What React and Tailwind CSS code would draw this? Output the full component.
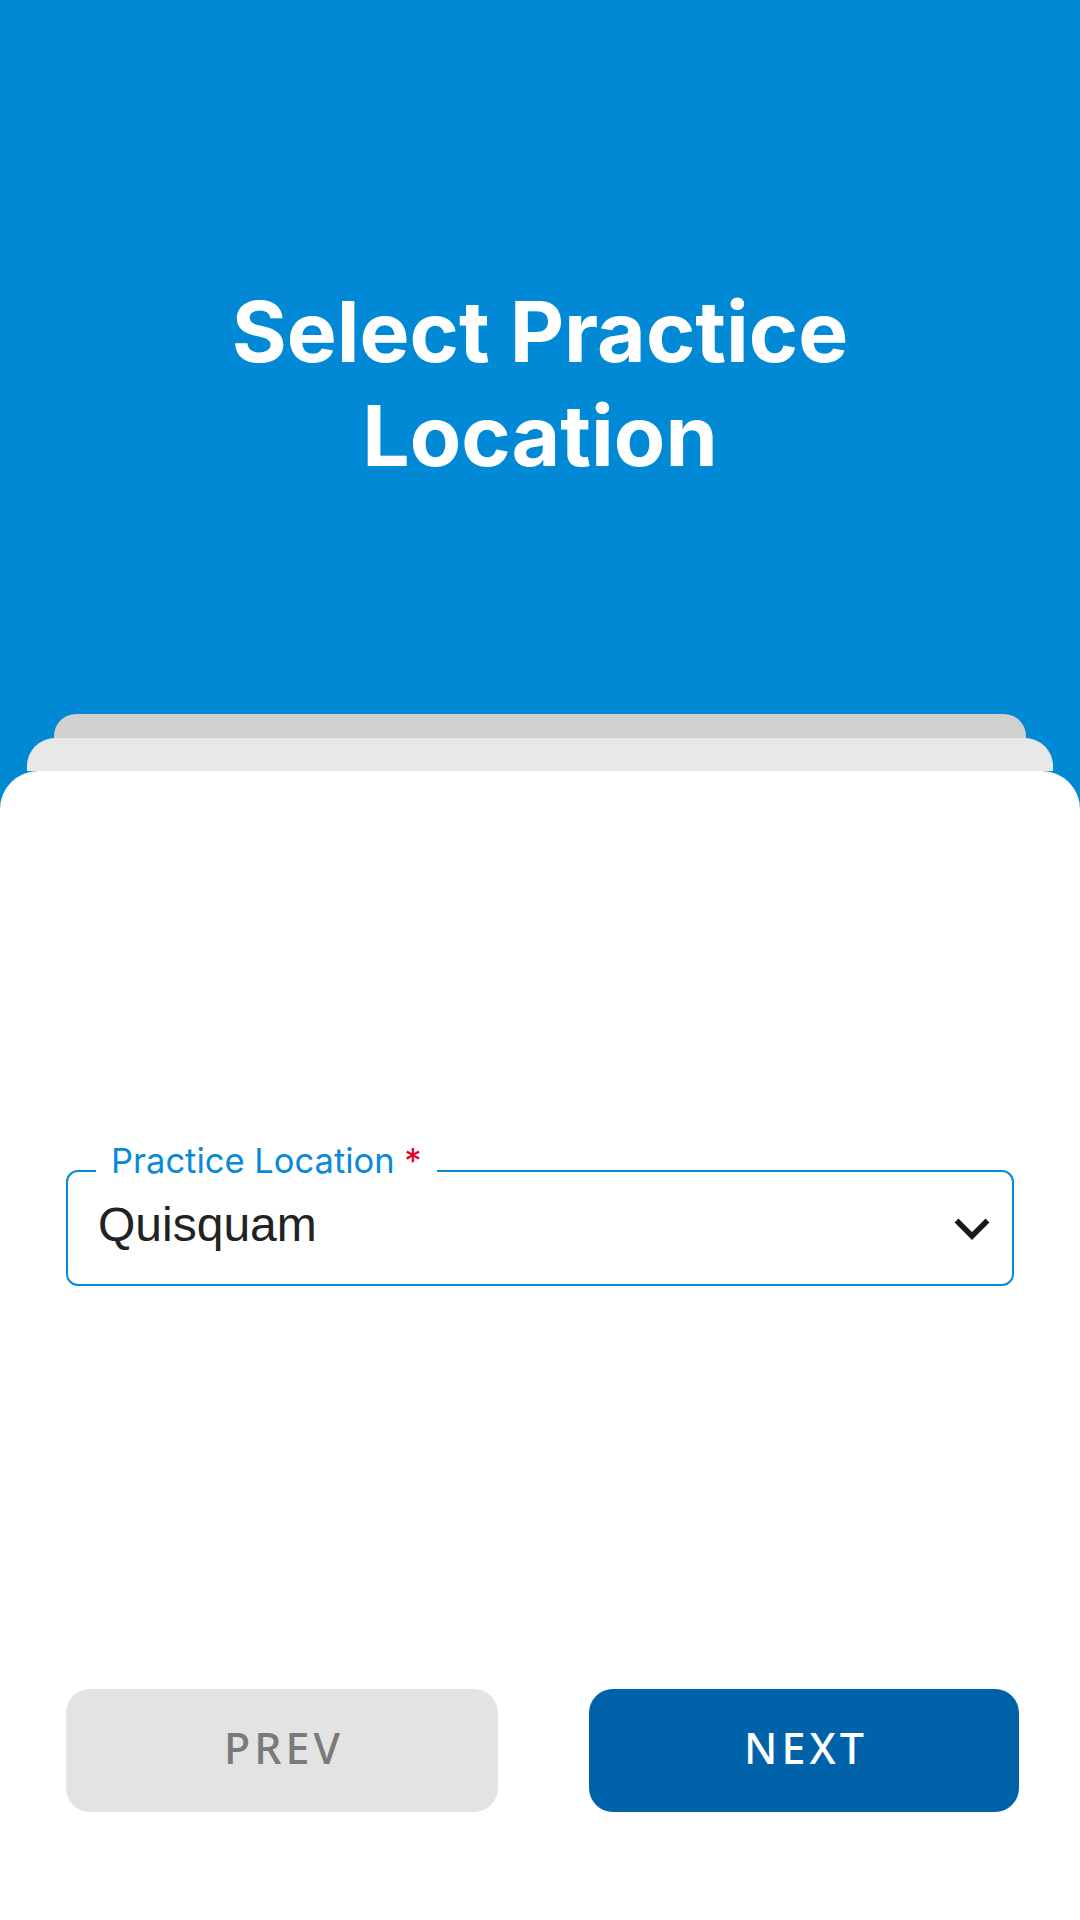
export default function App() {
  return (
    <div className="flex min-h-[1920px] w-[1080px] flex-col bg-[#0289d6]">
      <div className="h-[714px] pt-[280px]">
        <h1 className="text-center font-['Inter',sans-serif] text-[84px] font-bold leading-[104px] text-white">
          Select Practice
          <br />
          Location
        </h1>
      </div>
      <div className="mx-[54px] h-[24px] rounded-t-[22px] bg-[#d0d0d0]" />
      <div className="mx-[27px] h-[33px] rounded-t-[28px] bg-[#e8e8e8]" />
      <div className="flex flex-1 flex-col rounded-t-[38px] bg-white">
        <div className="px-[66px] pt-[399px]">
          <div className="relative flex h-[116px] items-center rounded-[12px] border-2 border-[#0a8ad6] pl-[30px] pr-[22px]">
            <span className="absolute left-[28px] top-[-29px] bg-white px-[15px] font-['Inter',sans-serif] text-[34.5px] leading-[35px] text-[#0a8ad6]">
              Practice Location <span className="text-[#e4002b]">*</span>
            </span>
            <span className="flex-1 pb-[6px] font-['Liberation_Sans',Arial,sans-serif] text-[48px] text-[#222222]">
              Quisquam
            </span>
            <svg width="36" height="23" viewBox="0 0 36 23" className="mt-[2px]">
              <path d="M2.5 2.5 L18 18 L33.5 2.5" fill="none" stroke="#1a1a1a" strokeWidth="5.5" />
            </svg>
          </div>
        </div>
        <div className="mt-[403px] flex gap-[91px] pl-[66px] pr-[61px]">
          <button className="flex h-[123px] w-[432px] items-center justify-center rounded-[24px] bg-[#e3e3e3] pb-[4px] pl-[4px] font-['Noto_Sans',sans-serif] text-[43px] font-medium tracking-[4px] text-[#7a7a7a]">
            PREV
          </button>
          <button className="flex h-[123px] w-[430px] items-center justify-center rounded-[24px] bg-[#0063aa] pb-[4px] pl-[4px] font-['Noto_Sans',sans-serif] text-[43px] font-medium tracking-[4px] text-white">
            NEXT
          </button>
        </div>
      </div>
    </div>
  );
}
